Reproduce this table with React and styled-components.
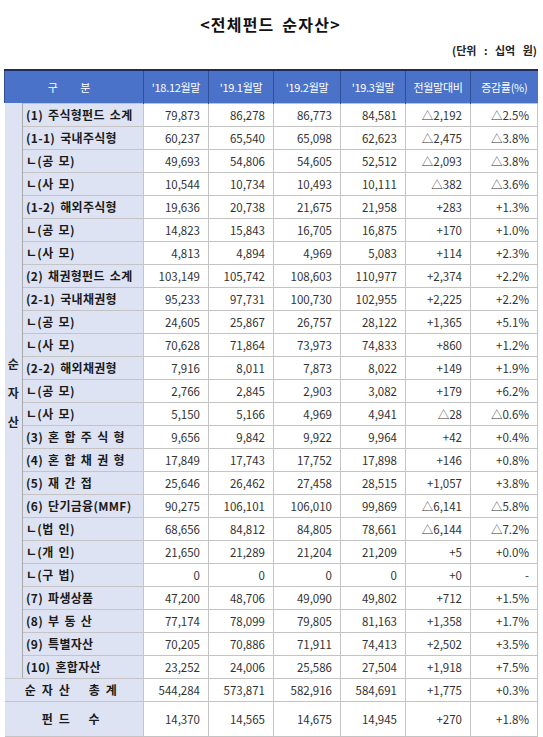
import React from "react";
import styled, { createGlobalStyle } from "styled-components";

const Global = createGlobalStyle`
  html, body { margin: 0; padding: 0; background: #fff; }
  body { font-family: "Noto Sans CJK KR", "Noto Sans", sans-serif; color: #222; }
`;

const Page = styled.div`
  width: 543px;
  padding: 0 6px 0 4px;
  box-sizing: border-box;
`;

const Title = styled.h1`
  margin: 12px 0 0;
  height: 24px;
  line-height: 24px;
  text-align: center;
  font-size: 16px;
  font-weight: 700;
  color: #111;
  letter-spacing: 1.2px;
  word-spacing: 3px;
`;

const Unit = styled.div`
  margin-top: 4px;
  height: 20px;
  line-height: 20px;
  text-align: right;
  font-size: 11px;
  font-weight: 700;
  color: #222;
  word-spacing: 5px;
`;

const Table = styled.table`
  margin-top: 9px;
  width: 533px;
  border-collapse: collapse;
  table-layout: fixed;
  font-size: 11.5px;
`;

const Col = styled.col`
  width: ${(p) => p.$w}px;
`;

const HeadRow = styled.tr`
  height: 33px;
  background: #4a72c8;
  border-top: 2px solid #1e2d5c;
`;

const Th = styled.th`
  color: #fff;
  font-weight: 400;
  font-size: 11px;
  text-align: center;
  padding: 0;
  border-left: 1px solid #2f4f99;
  white-space: nowrap;
  letter-spacing: ${(p) => (p.$wide ? "10px" : "-0.3px")};
`;

const Row = styled.tr`
  height: ${(p) => p.$h || 23}px;
`;

const Side = styled.td`
  background: #dde3f3;
  border-right: 1px solid #a9a9a9;
  border-bottom: 1px solid #c8c8c8;
  padding: 0;
  text-align: center;
  vertical-align: middle;
`;

const SideText = styled.div`
  display: flex;
  flex-direction: column;
  align-items: center;
  gap: 12px;
  font-weight: 700;
  font-size: 12px;
  color: #222;
  padding-top: 4px;
`;

const Label = styled.td`
  background: #dde3f3;
  border: 1px solid #c4c4c4;
  border-left: ${(p) => (p.$span ? "none" : "1px solid #a9a9a9")};
  padding: 0 0 0 ${(p) => (p.$center ? 0 : 3)}px;
  text-align: ${(p) => (p.$center ? "center" : "left")};
  font-weight: 700;
  font-size: 12px;
  color: #1a1a1a;
  white-space: nowrap;
  overflow: hidden;
  letter-spacing: ${(p) => (p.$center ? "6px" : "0.3px")};
  word-spacing: ${(p) => (p.$center ? "4px" : "2px")};
`;

const Num = styled.td`
  border: 1px solid #c4c4c4;
  padding: 0 8px 0 0;
  text-align: right;
  color: #333;
  white-space: nowrap;
  background: #fff;
`;

const rows = [
  ["(1) 주식형펀드 소계", "79,873", "86,278", "86,773", "84,581", "△2,192", "△2.5%"],
  ["(1-1) 국내주식형", "60,237", "65,540", "65,098", "62,623", "△2,475", "△3.8%"],
  ["ㄴ(공 모)", "49,693", "54,806", "54,605", "52,512", "△2,093", "△3.8%"],
  ["ㄴ(사 모)", "10,544", "10,734", "10,493", "10,111", "△382", "△3.6%"],
  ["(1-2) 해외주식형", "19,636", "20,738", "21,675", "21,958", "+283", "+1.3%"],
  ["ㄴ(공 모)", "14,823", "15,843", "16,705", "16,875", "+170", "+1.0%"],
  ["ㄴ(사 모)", "4,813", "4,894", "4,969", "5,083", "+114", "+2.3%"],
  ["(2) 채권형펀드 소계", "103,149", "105,742", "108,603", "110,977", "+2,374", "+2.2%"],
  ["(2-1) 국내채권형", "95,233", "97,731", "100,730", "102,955", "+2,225", "+2.2%"],
  ["ㄴ(공 모)", "24,605", "25,867", "26,757", "28,122", "+1,365", "+5.1%"],
  ["ㄴ(사 모)", "70,628", "71,864", "73,973", "74,833", "+860", "+1.2%"],
  ["(2-2) 해외채권형", "7,916", "8,011", "7,873", "8,022", "+149", "+1.9%"],
  ["ㄴ(공 모)", "2,766", "2,845", "2,903", "3,082", "+179", "+6.2%"],
  ["ㄴ(사 모)", "5,150", "5,166", "4,969", "4,941", "△28", "△0.6%"],
  ["(3) 혼 합 주 식 형", "9,656", "9,842", "9,922", "9,964", "+42", "+0.4%"],
  ["(4) 혼 합 채 권 형", "17,849", "17,743", "17,752", "17,898", "+146", "+0.8%"],
  ["(5) 재 간 접", "25,646", "26,462", "27,458", "28,515", "+1,057", "+3.8%"],
  ["(6) 단기금융(MMF)", "90,275", "106,101", "106,010", "99,869", "△6,141", "△5.8%"],
  ["ㄴ(법 인)", "68,656", "84,812", "84,805", "78,661", "△6,144", "△7.2%"],
  ["ㄴ(개 인)", "21,650", "21,289", "21,204", "21,209", "+5", "+0.0%"],
  ["ㄴ(구 법)", "0", "0", "0", "0", "+0", "-"],
  ["(7) 파생상품", "47,200", "48,706", "49,090", "49,802", "+712", "+1.5%"],
  ["(8) 부 동 산", "77,174", "78,099", "79,805", "81,163", "+1,358", "+1.7%"],
  ["(9) 특별자산", "70,205", "70,886", "71,911", "74,413", "+2,502", "+3.5%"],
  ["(10) 혼합자산", "23,252", "24,006", "25,586", "27,504", "+1,918", "+7.5%"],
];

const totals = [
  ["순자산 총계", 23, "544,284", "573,871", "582,916", "584,691", "+1,775", "+0.3%"],
  ["펀드 수", 35, "14,370", "14,565", "14,675", "14,945", "+270", "+1.8%"],
];

const heads = ["'18.12월말", "'19.1월말", "'19.2월말", "'19.3월말", "전월말대비", "증감률(%)"];
const widths = [18, 121, 65, 65, 67, 65, 65, 67];

export default function App() {
  return (
    <Page>
      <Global />
      <Title>&lt;전체펀드 순자산&gt;</Title>
      <Unit>(단위 : 십억 원)</Unit>
      <Table>
        <colgroup>
          {widths.map((w, i) => (
            <Col key={i} $w={w} />
          ))}
        </colgroup>
        <thead>
          <HeadRow>
            <Th colSpan={2} $wide>구 분</Th>
            {heads.map((h) => (
              <Th key={h}>{h}</Th>
            ))}
          </HeadRow>
        </thead>
        <tbody>
          {rows.map((r, i) => (
            <Row key={i}>
              {i === 0 && (
                <Side rowSpan={rows.length}>
                  <SideText>
                    <span>순</span>
                    <span>자</span>
                    <span>산</span>
                  </SideText>
                </Side>
              )}
              <Label>{r[0]}</Label>
              {r.slice(1).map((v, j) => (
                <Num key={j}>{v}</Num>
              ))}
            </Row>
          ))}
          {totals.map((t) => (
            <Row key={t[0]} $h={t[1]}>
              <Label colSpan={2} $center $span>
                {t[0]}
              </Label>
              {t.slice(2).map((v, j) => (
                <Num key={j}>{v}</Num>
              ))}
            </Row>
          ))}
        </tbody>
      </Table>
    </Page>
  );
}
